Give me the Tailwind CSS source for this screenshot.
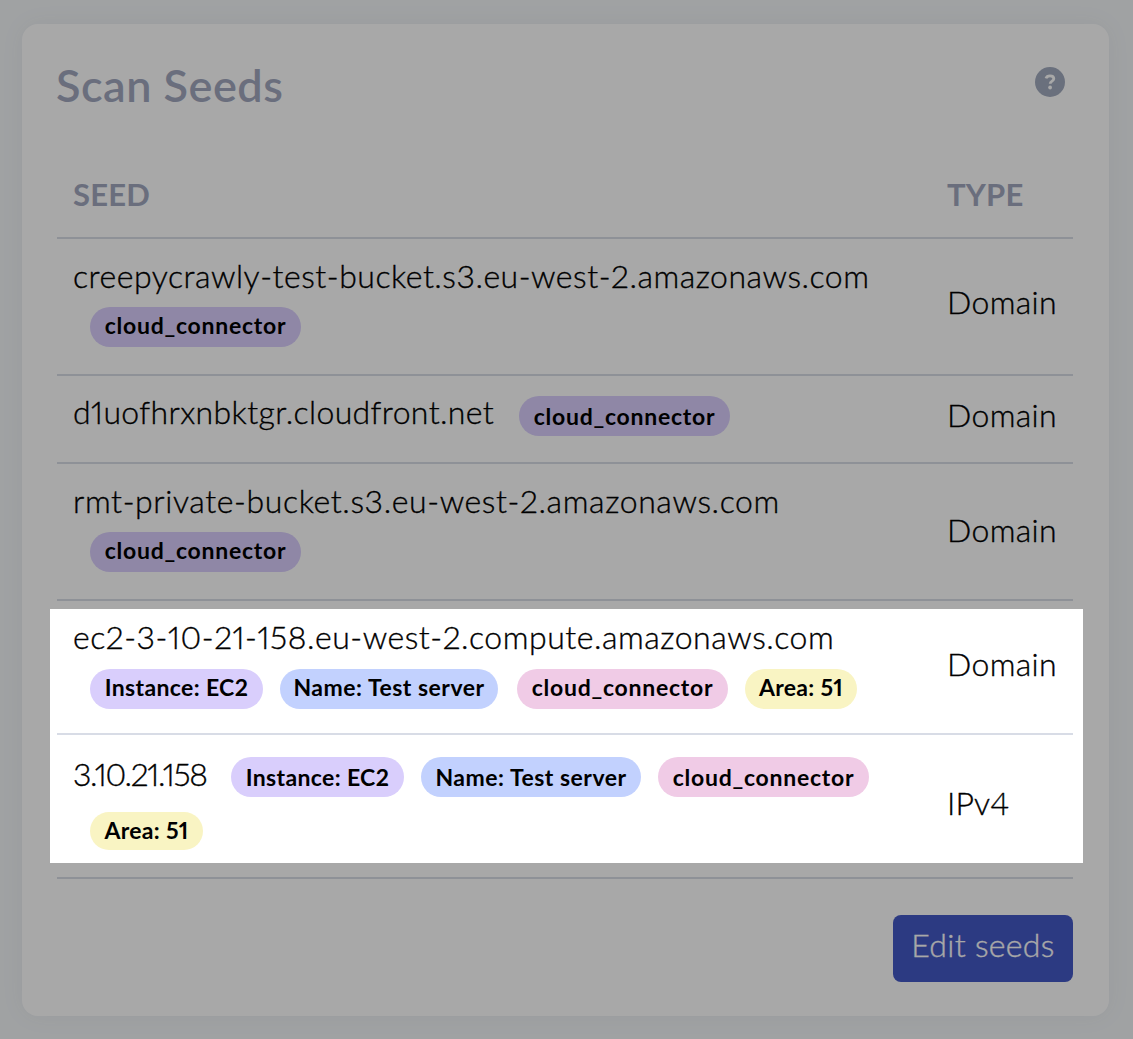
<!DOCTYPE html>
<html lang="en">
<head>
    <meta charset="UTF-8">
    <meta name="viewport" content="width=device-width, initial-scale=1.0">
    <title>Scan Seeds</title>
    <script src="https://cdn.jsdelivr.net/npm/@tailwindcss/browser@4"></script>
</head>
<body class="bg-[#f3f6f8] h-[1039px] overflow-hidden font-['Lato',sans-serif] text-black proportional-nums">
    <div class="relative h-[1039px] overflow-hidden pt-6 pl-[22px] pr-6">
        <!-- Card -->
        <div class="h-[992px] bg-white rounded-2xl shadow-[0_0_24px_rgba(60,70,90,0.06)] pl-[35px] pr-9">
            <div class="h-[127px] flex justify-between items-start pt-[34px] pr-2">
                <h1 class="-ml-px text-[45px] leading-[54px] tracking-[0.5px] font-semibold text-[#a2a8be]">Scan Seeds</h1>
                <svg class="w-[30px] h-[30px] mt-[9px]" viewBox="0 0 30 30" fill="none">
                    <circle cx="15" cy="15" r="15" fill="#a2abbe"/>
                    <path d="M11 11.4C11.6 9.5 13 8.9 15 8.9C17.4 8.9 18.8 10 18.8 11.8C18.8 14.2 15.2 14 15.2 16.7" stroke="#fff" stroke-width="2.8"/>
                    <circle cx="15.1" cy="20.5" r="1.9" fill="#fff"/>
                </svg>
            </div>

            <!-- Table head -->
            <div class="h-[88px] grid grid-cols-[874px_1fr] pl-4 pt-6 border-b-2 border-[#d8dce6] text-[31px] leading-[38px] tracking-[0.2px] font-bold text-[#a2a8be]">
                <div>SEED</div>
                <div>TYPE</div>
            </div>

            <!-- Rows -->
            <div class="h-[137px] grid grid-cols-[874px_1fr] pl-4 border-b-2 border-[#d8dce6] text-[32px] leading-[40px] tracking-[0.35px] font-light [-webkit-text-stroke:0.35px_black]">
                <div class="pt-[17px]">
                    <div class="whitespace-nowrap tracking-[0.52px]">creepycrawly-test-bucket.s3.eu-west-2.amazonaws.com</div>
                    <div class="flex pl-[17px] pt-[11px] text-[23px] font-bold [-webkit-text-stroke:0]">
                        <span class="w-[211px] h-10 leading-[36px] tracking-[0.75px] text-center rounded-full bg-[#d9cefc]">cloud_connector</span>
                    </div>
                </div>
                <div class="pt-[43px]">Domain</div>
            </div>
            <div class="h-[88px] grid grid-cols-[874px_1fr] pl-4 border-b-2 border-[#d8dce6] text-[32px] leading-[40px] tracking-[0.35px] font-light [-webkit-text-stroke:0.35px_black]">
                <div class="flex pt-[16px]">
                    <div class="w-[446px] whitespace-nowrap tracking-[0.37px]">d1uofhrxnbktgr.cloudfront.net</div>
                    <span class="w-[211px] h-10 mt-1 text-[23px] leading-[40px] tracking-[0.75px] font-bold text-center rounded-full bg-[#d9cefc] [-webkit-text-stroke:0]">cloud_connector</span>
                </div>
                <div class="pt-[19px]">Domain</div>
            </div>
            <div class="h-[137px] grid grid-cols-[874px_1fr] pl-4 border-b-2 border-[#d8dce6] text-[32px] leading-[40px] tracking-[0.35px] font-light [-webkit-text-stroke:0.35px_black]">
                <div class="pt-[17px]">
                    <div class="whitespace-nowrap tracking-[0.61px]">rmt-private-bucket.s3.eu-west-2.amazonaws.com</div>
                    <div class="flex pl-[17px] pt-[11px] text-[23px] font-bold [-webkit-text-stroke:0]">
                        <span class="w-[211px] h-10 leading-[36px] tracking-[0.75px] text-center rounded-full bg-[#d9cefc]">cloud_connector</span>
                    </div>
                </div>
                <div class="pt-[46px]">Domain</div>
            </div>
            <div class="h-[134px] grid grid-cols-[874px_1fr] pl-4 border-b-2 border-[#d8dce6] text-[32px] leading-[40px] tracking-[0.35px] font-light [-webkit-text-stroke:0.35px_black]">
                <div class="pt-[16px]">
                    <div class="whitespace-nowrap tracking-[0.53px]">ec2-3-10-21-158.eu-west-2.compute.amazonaws.com</div>
                    <div class="flex pl-[17px] pt-[12px] text-[23px] leading-[36px] font-bold text-center [-webkit-text-stroke:0]">
                        <span class="w-[173px] h-10 tracking-[0.35px] rounded-full bg-[#d9cefc]">Instance: EC2</span>
                        <span class="w-[218px] h-10 ml-[17px] tracking-[0.5px] rounded-full bg-[#c2d1fe]">Name: Test server</span>
                        <span class="w-[211px] h-10 ml-[19px] tracking-[0.75px] rounded-full bg-[#f0cbe6]">cloud_connector</span>
                        <span class="w-[112px] h-10 ml-[17px] tracking-[0.3px] rounded-full bg-[#f9f4c3]">Area: 51</span>
                    </div>
                </div>
                <div class="pt-[43px]">Domain</div>
            </div>
            <div class="h-[144px] grid grid-cols-[874px_1fr] pl-4 border-b-2 border-[#d8dce6] text-[32px] leading-[40px] tracking-[0.1px] font-light [-webkit-text-stroke:0.35px_black]">
                <div class="pt-[18px]">
                    <div class="flex">
                        <div class="w-[158px] pt-px whitespace-nowrap tracking-[-1.3px]">3.10.21.158</div>
                        <div class="flex pt-1 text-[23px] leading-[40px] font-bold text-center [-webkit-text-stroke:0]">
                            <span class="w-[173px] h-10 tracking-[0.35px] rounded-full bg-[#d9cefc]">Instance: EC2</span>
                            <span class="w-[220px] h-10 ml-[17px] tracking-[0.5px] rounded-full bg-[#c2d1fe]">Name: Test server</span>
                            <span class="w-[211px] h-10 ml-[17px] tracking-[0.75px] rounded-full bg-[#f0cbe6]">cloud_connector</span>
                        </div>
                    </div>
                    <div class="flex pl-[17px] pt-[15px] text-[23px] leading-[36px] font-bold text-center [-webkit-text-stroke:0]">
                        <span class="w-[113px] h-[38px] tracking-[0.3px] rounded-full bg-[#f9f4c3]">Area: 51</span>
                    </div>
                </div>
                <div class="pt-[48px]">IPv4</div>
            </div>

            <div class="flex justify-end pt-9">
                <button class="w-[180px] h-[67px] rounded-lg bg-[#4459c6] text-white text-[32px] leading-[40px] tracking-[0.3px] font-light pb-[7px] [-webkit-text-stroke:0.35px_white]">Edit seeds</button>
            </div>
        </div>

        <!-- Spotlight: dims everything outside of it -->
        <div class="absolute left-[50px] top-[609px] w-[1033px] h-[254px] shadow-[0_0_0_1200px_rgba(0,0,0,0.34)]"></div>
    </div>
</body>
</html>
